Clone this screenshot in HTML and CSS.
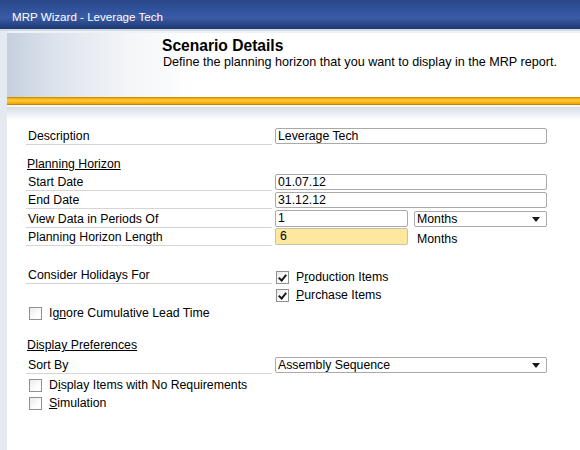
FILE: index.html
```html
<!DOCTYPE html>
<html>
<head>
<meta charset="utf-8">
<link rel="stylesheet" href="styles.css">
</head>
<body>
<div class="titlebar">MRP Wizard - Leverage Tech</div>
<div class="main">
  <div class="strip"></div>
  <div class="panel">
    <div class="header">
      <div class="h-title">Scenario Details</div>
      <div class="h-sub">Define the planning horizon that you want to display in the MRP report.</div>
    </div>
    <div class="orange"></div>
    <div class="band"></div>
    <div class="form">
      <div class="row">
        <div class="label">Description</div>
        <div class="input wide">Leverage Tech</div>
      </div>
      <div class="heading heading-ph"><span class="u">Planning Horizon</span></div>
      <div class="row">
        <div class="label">Start Date</div>
        <div class="input wide">01.07.12</div>
      </div>
      <div class="row">
        <div class="label">End Date</div>
        <div class="input wide">31.12.12</div>
      </div>
      <div class="row row-view">
        <div class="label">View Data in Periods Of</div>
        <div class="input half">1</div>
        <div class="select small">Months<span class="arrow"></span></div>
      </div>
      <div class="row">
        <div class="label">Planning Horizon Length</div>
        <div class="input half yellow">6</div>
        <div class="unit">Months</div>
      </div>
      <div class="row row-holidays">
        <div class="label">Consider Holidays For</div>
        <div class="check-item"><span class="cb checked"></span><span>P<span class="u">r</span>oduction Items</span></div>
      </div>
      <div class="row">
        <div class="label nolabel"></div>
        <div class="check-item"><span class="cb checked"></span><span><span class="u">P</span>urchase Items</span></div>
      </div>
      <div class="row">
        <div class="check-item left"><span class="cb"></span><span>Ig<span class="u">n</span>ore Cumulative Lead Time</span></div>
      </div>
      <div class="heading heading-dp"><span class="u">Display Preferences</span></div>
      <div class="row">
        <div class="label">Sort By</div>
        <div class="select wide">Assembly Sequence<span class="arrow"></span></div>
      </div>
      <div class="row">
        <div class="check-item left"><span class="cb"></span><span>D<span class="u">i</span>splay Items with No Requirements</span></div>
      </div>
      <div class="row">
        <div class="check-item left"><span class="cb"></span><span><span class="u">S</span>imulation</span></div>
      </div>
    </div>
  </div>
</div>
</body>
</html>
```
FILE: styles.css
```css
html, body {
  margin: 0;
  padding: 0;
}
body {
  width: 580px;
  height: 450px;
  overflow: hidden;
  background: #ffffff;
  font-family: "Liberation Sans", Arial, sans-serif;
  font-size: 12.3px;
  color: #000;
}
.titlebar {
  height: 31px;
  box-sizing: border-box;
  padding: 10px 0 0 12px;
  color: #fff;
  font-size: 11.6px;
  background: linear-gradient(to bottom, #2a4889 0%, #3456a0 45%, #3a5ca6 60%, #24417f 90%, #1d3670 100%);
  border-bottom: 2px solid #d4dae4;
}
.main {
  display: flex;
  height: 419px;
}
.strip {
  width: 7px;
  background: #e5eaf2;
  flex: none;
}
.panel {
  flex: 1;
  display: flex;
  flex-direction: column;
}
.header {
  height: 66px;
  box-sizing: border-box;
  padding: 4px 0 0 155px;
  background: linear-gradient(to right, #c5cfde 0px, #d9e0ea 40px, #e4e9f0 70px, #f3f5f8 120px, #ffffff 190px);
  border-top: 2px solid #eef1f5;
}
.h-title {
  font-weight: bold;
  font-size: 15.6px;
  line-height: 18px;
}
.h-sub {
  line-height: 14px;
  margin-left: 1px;
  font-size: 12.6px;
}
.orange {
  height: 8px;
  box-sizing: border-box;
  border-top: 1px solid #cf9000;
  border-bottom: 1px solid #c98700;
  background: linear-gradient(to bottom, #eeaa00 0%, #ffc739 40%, #f8bb22 65%, #e9a300 100%);
}
.band {
  height: 15px;
  box-sizing: border-box;
  border-top: 2px solid #f4f6f9;
  background: linear-gradient(to bottom, #d8dee8 0%, #e6eaf1 40%, #ffffff 100%);
}
.form {
  padding: 7px 0 0 19px;
}
.row {
  display: flex;
  align-items: flex-end;
  height: 18px;
}
.row-view {
  height: 19px;
}
.row-holidays {
  margin-top: 20px;
}
.label {
  width: 246px;
  height: 18px;
  box-sizing: border-box;
  padding: 0 0 1px 2px;
  border-bottom: 1px solid #d5d5d5;
  display: flex;
  align-items: flex-end;
  line-height: 14px;
  flex: none;
}
.row-view .label {
  height: 19px;
}
.nolabel {
  border-bottom: none;
}
.input, .select {
  height: 16px;
  box-sizing: border-box;
  border: 1px solid #a9a9a9;
  border-radius: 2px;
  padding-left: 2px;
  line-height: 14px;
  margin-left: 3px;
  margin-bottom: 1px;
  position: relative;
  background: #fff;
}
.wide {
  width: 272px;
}
.half {
  width: 133px;
  height: 17px;
  line-height: 15px;
  margin-bottom: 1px;
}
.yellow {
  background: #fde89e;
  width: 133px;
  border-color: #c8c2a8;
  padding-left: 4px;
}
.select.small {
  width: 133px;
  margin-left: 6px;
  height: 16px;
}
.arrow {
  position: absolute;
  right: 6px;
  top: 5px;
  width: 0;
  height: 0;
  border-left: 4px solid transparent;
  border-right: 4px solid transparent;
  border-top: 5px solid #1a1a1a;
}
.unit {
  margin-left: 9px;
  line-height: 16px;
  margin-bottom: -1px;
}
.heading {
  height: 17px;
  line-height: 17px;
  padding-left: 1px;
}
.heading-ph {
  margin-top: 11px;
}
.heading-dp {
  margin-top: 17px;
  height: 19px;
}
.u {
  text-decoration: underline;
}
.check-item {
  display: flex;
  align-items: center;
  gap: 7px;
  margin-left: 4px;
  height: 14px;
  line-height: 14px;
}
.check-item.left {
  margin-left: 3px;
}
.cb {
  width: 13px;
  height: 13px;
  box-sizing: border-box;
  border: 1px solid #8f9090;
  background: linear-gradient(135deg, #e9e9e9 0%, #ffffff 70%);
  position: relative;
  flex: none;
}
.cb.checked::after {
  content: "";
  position: absolute;
  left: 3px;
  top: 1px;
  width: 3px;
  height: 6px;
  border-right: 2px solid #1a1a1a;
  border-bottom: 2px solid #1a1a1a;
  transform: rotate(40deg);
}
```
